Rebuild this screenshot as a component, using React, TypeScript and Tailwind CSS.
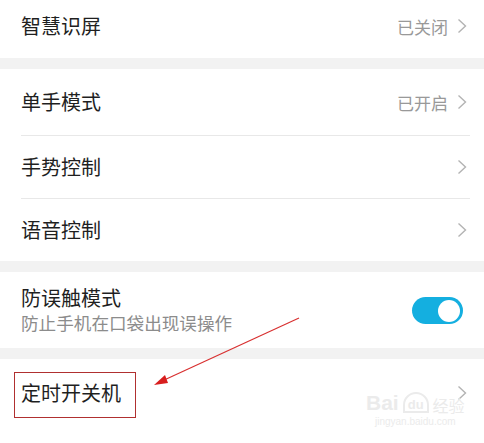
import React from 'react';

const font = { fontFamily: '"Noto Sans CJK SC", "Noto Sans", sans-serif' };

function Chevron() {
  return (
    <svg width="10" height="16" viewBox="0 0 10 16" className="shrink-0">
      <path d="M1.5 1.5 L8.5 8 L1.5 14.5" fill="none" stroke="#b3b3b3" strokeWidth="1.4" />
    </svg>
  );
}

function Row({ title, value, h, pb = 0 }: { title: string; value?: string; h: string; pb?: number }) {
  return (
    <div className={`flex items-center justify-between pl-[21px] pr-[17px] ${h}`} style={{ paddingBottom: pb }}>
      <span className="text-[20px] text-[#1f1f1f] leading-none">{title}</span>
      <div className="flex items-center gap-[9px]">
        {value && <span className="text-[17px] text-[#999999] leading-none">{value}</span>}
        <Chevron />
      </div>
    </div>
  );
}

export default function App() {
  return (
    <div className="relative w-[484px] h-[443px] overflow-hidden bg-white" style={font}>
      <Row title="智慧识屏" value="已关闭" h="h-[58px]" pb={6} />
      <div className="h-[11px] bg-[#f2f2f2]" />

      <Row title="单手模式" value="已开启" h="h-[66px]" />
      <div className="ml-[21px] mr-[14px] h-px bg-[#e8e8e8]" />
      <Row title="手势控制" h="h-[62px]" />
      <div className="ml-[21px] mr-[14px] h-px bg-[#e8e8e8]" />
      <Row title="语音控制" h="h-[62px]" />
      <div className="h-[11px] bg-[#f2f2f2]" />

      <div className="flex items-center justify-between pl-[21px] pr-[21px] h-[76px]">
        <div className="flex flex-col gap-[6px]">
          <span className="text-[20px] text-[#1f1f1f] leading-none">防误触模式</span>
          <span className="text-[17.6px] text-[#8c8c8c] leading-none">防止手机在口袋出现误操作</span>
        </div>
        <div className="w-[51px] h-[27px] rounded-full bg-[#14afe0] flex items-center justify-end pr-[3px] mt-[1px]">
          <div className="w-[22px] h-[22px] rounded-full bg-white" />
        </div>
      </div>
      <div className="h-[11px] bg-[#f2f2f2]" />

      <div className="flex items-center justify-between pl-[21px] pr-[17px] h-[68px]">
        <span className="text-[20px] text-[#1f1f1f] leading-none">定时开关机</span>
        <Chevron />
      </div>

      {/* red annotation box */}
      <div className="absolute left-[14px] top-[372px] w-[122px] h-[46px] border border-[#b03030]" />

      {/* arrow */}
      <svg className="absolute left-0 top-0" width="484" height="443">
        <line x1="299" y1="318" x2="162" y2="381" stroke="#d83030" strokeWidth="1.2" />
        <polygon points="154,385 165,375 168,383" fill="#d81e1e" />
      </svg>

      {/* watermark */}
      <div className="absolute left-[366px] top-[392px] flex flex-col items-center text-[#ebebeb] leading-none">
        <div className="flex items-end gap-[4px]">
          <span className="text-[21px] font-bold" style={{ fontFamily: '"Liberation Sans", sans-serif' }}>Bai</span>
          <span className="text-[13px] font-bold rounded-t-full border-2 border-[#ebebeb] px-[3px] pt-[4px]" style={{ fontFamily: '"Liberation Sans", sans-serif' }}>du</span>
          <span className="text-[16px]">经验</span>
        </div>
        <span className="text-[10px] mt-[4px]" style={{ fontFamily: '"Liberation Sans", sans-serif' }}>jingyan.baidu.com</span>
      </div>
    </div>
  );
}
